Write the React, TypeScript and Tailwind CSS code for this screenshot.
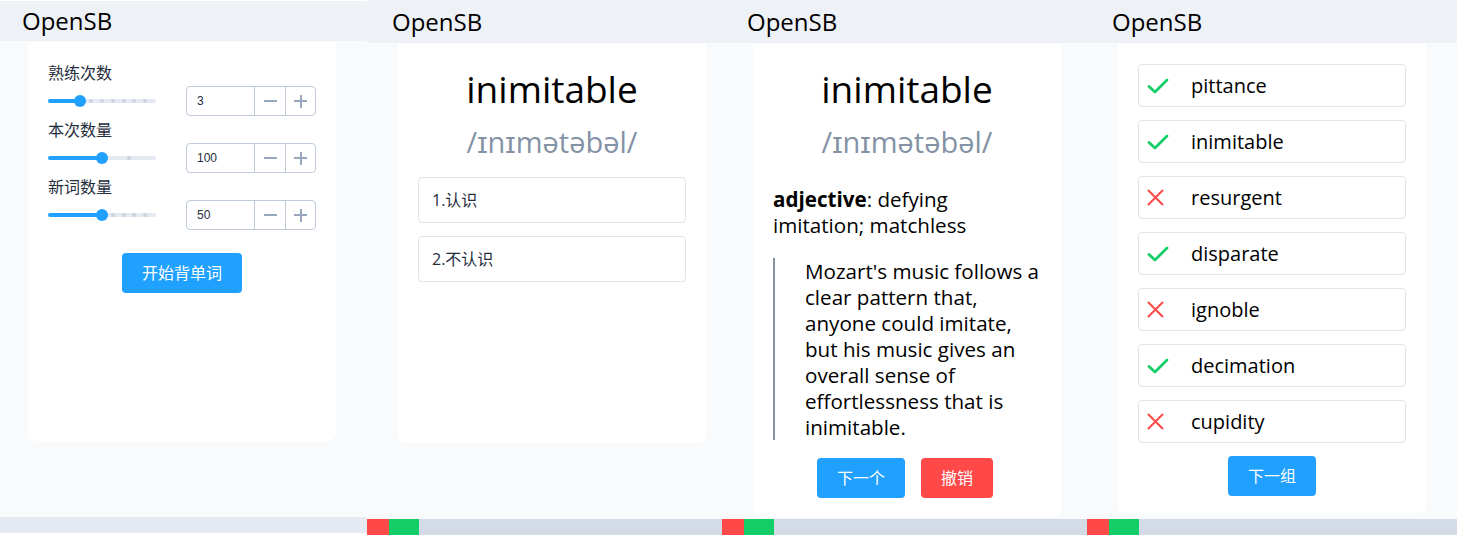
import React from "react";

const FONT = "font-['Open_Sans','Noto_Sans_CJK_SC',sans-serif]";

function Slider({ value, min, max, step }: { value: number; min: number; max: number; step: number }) {
  const pct = ((value - min) / (max - min)) * 100;
  const stops: number[] = [];
  for (let v = min + step; v < max; v += step) {
    if (v > value) stops.push(((v - min) / (max - min)) * 100);
  }
  return (
    <div className="relative w-[108px] h-[4px] rounded-full bg-[#e5e9f2]">
      <div className="absolute left-0 top-0 h-full rounded-full bg-[#20a0ff]" style={{ width: `${pct}%` }} />
      {stops.map((s) => (
        <div
          key={s}
          className="absolute top-0 w-[4px] h-[4px] -ml-[2px] rounded-full bg-[#cbd4df]"
          style={{ left: `${s}%` }}
        />
      ))}
      <div
        className="absolute top-[-4px] w-[12px] h-[12px] -ml-[6px] rounded-full bg-[#20a0ff]"
        style={{ left: `${pct}%` }}
      />
    </div>
  );
}

function NumberInput({ value }: { value: string }) {
  return (
    <div className="flex h-[30px] w-[130px] rounded-[4px] border border-[#bfcbd9] bg-white">
      <div className="flex-1 flex items-center pl-[10px] text-[12px] text-[#1f2d3d] font-['Liberation_Sans',sans-serif]">
        {value}
      </div>
      <div className="w-[31px] flex items-center justify-center border-l border-[#bfcbd9]">
        <div className="w-[13px] h-[2px] bg-[#97a8be]" />
      </div>
      <div className="relative w-[30px] flex items-center justify-center border-l border-[#bfcbd9]">
        <div className="w-[13px] h-[2px] bg-[#97a8be]" />
        <div className="absolute w-[2px] h-[13px] bg-[#97a8be]" />
      </div>
    </div>
  );
}

function Header({ h, pl }: { h: string; pl: string }) {
  return (
    <div className={`${h} ${pl} flex items-center bg-[#eef1f6] text-[24px] text-black`}>OpenSB</div>
  );
}

function ProgressBar() {
  return (
    <div className="flex h-[16px] bg-[#d3dce6]">
      <div className="w-[22px] bg-[#ff4949]" />
      <div className="w-[30px] bg-[#13ce66]" />
    </div>
  );
}

function WordHead() {
  return (
    <div className="flex flex-col items-center">
      <div className="text-[37px] leading-[44px] text-black">inimitable</div>
      <div className="mt-[11px] text-[29px] leading-[40px] text-[#8492a6]">/ɪnɪmətəbəl/</div>
    </div>
  );
}

function Check() {
  return (
    <svg width="22" height="16" viewBox="0 0 22 16" fill="none">
      <path d="M2 8.5 L8 14 L20 2" stroke="#13ce66" strokeWidth="2.8" strokeLinecap="round" strokeLinejoin="round" />
    </svg>
  );
}

function Cross() {
  return (
    <svg width="17" height="17" viewBox="0 0 17 17" fill="none">
      <path d="M1.5 1.5 L15.5 15.5 M15.5 1.5 L1.5 15.5" stroke="#ff4949" strokeWidth="2" strokeLinecap="round" />
    </svg>
  );
}

export default function App() {
  const settings = [
    { label: "熟练次数", value: 3, min: 0, max: 10, step: 1 },
    { label: "本次数量", value: 100, min: 0, max: 200, step: 50 },
    { label: "新词数量", value: 50, min: 0, max: 100, step: 10 },
  ];
  const words: [string, boolean][] = [
    ["pittance", true],
    ["inimitable", true],
    ["resurgent", false],
    ["disparate", true],
    ["ignoble", false],
    ["decimation", true],
    ["cupidity", false],
  ];
  return (
    <div className={`flex w-[1459px] h-[535px] bg-white ${FONT}`}>
      {/* Panel 1 */}
      <div className="flex flex-col w-[367px] pt-[1px]">
        <Header h="h-[40px]" pl="pl-[22px]" />
        <div className="h-[476px] bg-[#f9fafc] pl-[28px] pt-[1px]">
          <div className="w-[308px] h-[399px] bg-white rounded-b-lg px-[20px] pt-[21px] flex flex-col">
            {settings.map((s) => (
              <div key={s.label} className="flex flex-col mb-[4px]">
                <div className="text-[16px] leading-[20px] text-[#1f2d3d]">{s.label}</div>
                <div className="mt-[3px] flex items-center justify-between">
                  <Slider value={s.value} min={s.min} max={s.max} step={s.step} />
                  <NumberInput value={String(s.value)} />
                </div>
              </div>
            ))}
            <div className="flex justify-center mt-[19px]">
              <div className="w-[120px] h-[40px] rounded-[4px] bg-[#20a0ff] text-white text-[16px] flex items-center justify-center">
                开始背单词
              </div>
            </div>
          </div>
        </div>
        <div className="h-[16px] bg-[#e5e9f2]" />
      </div>

      {/* Panel 2 */}
      <div className="flex flex-col w-[355px]">
        <Header h="h-[43px]" pl="pl-[25px]" />
        <div className="h-[476px] bg-[#f9fafc] pl-[31px] pt-[1px]">
          <div className="w-[308px] h-[399px] bg-white rounded-b-lg px-[20px] pt-[23px]">
            <WordHead />
            <div className="mt-[15px] flex flex-col gap-[13px]">
              {["1.认识", "2.不认识"].map((t) => (
                <div
                  key={t}
                  className="h-[46px] rounded-[4px] border border-[#dfe6ec] pl-[13px] flex items-center text-[16px] text-[#1f2d3d]"
                >
                  {t}
                </div>
              ))}
            </div>
          </div>
        </div>
        <ProgressBar />
      </div>

      {/* Panel 3 */}
      <div className="flex flex-col w-[365px]">
        <Header h="h-[43px]" pl="pl-[25px]" />
        <div className="h-[476px] bg-[#f9fafc] pl-[31px] pt-[1px]">
          <div className="w-[308px] bg-white rounded-b-lg px-[20px] pt-[23px] pb-[19px]">
            <WordHead />
            <div className="mt-[24px] text-[20.6px] leading-[26px] text-black">
              <span className="font-bold">adjective</span>: defying imitation; matchless
            </div>
            <div className="mt-[20px] border-l-[2px] border-[#8492a6] pl-[30px] text-[20.6px] leading-[26px] text-black">
              Mozart's music follows a clear pattern that, anyone could imitate, but his music gives an overall sense of
              effortlessness that is inimitable.
            </div>
            <div className="mt-[18px] pr-[4px] flex justify-center gap-[16px]">
              <div className="w-[88px] h-[40px] rounded-[4px] bg-[#20a0ff] text-white text-[16px] flex items-center justify-center">
                下一个
              </div>
              <div className="w-[72px] h-[40px] rounded-[4px] bg-[#ff4949] text-white text-[16px] flex items-center justify-center">
                撤销
              </div>
            </div>
          </div>
        </div>
        <ProgressBar />
      </div>

      {/* Panel 4 */}
      <div className="flex flex-col w-[370px]">
        <Header h="h-[43px]" pl="pl-[25px]" />
        <div className="h-[476px] bg-[#f9fafc] pl-[31px] pt-[1px]">
          <div className="w-[308px] bg-white rounded-b-lg px-[20px] pt-[20px] pb-[17px]">
            <div className="flex flex-col gap-[13px]">
              {words.map(([w, ok]) => (
                <div
                  key={w}
                  className="h-[43px] rounded-[4px] border border-[#dfe6ec] flex items-center text-[20px] text-black"
                >
                  <div className="w-[52px] pl-[8px] flex items-center">{ok ? <Check /> : <Cross />}</div>
                  <span>{w}</span>
                </div>
              ))}
            </div>
            <div className="mt-[13px] flex justify-center">
              <div className="w-[88px] h-[40px] rounded-[4px] bg-[#20a0ff] text-white text-[16px] flex items-center justify-center">
                下一组
              </div>
            </div>
          </div>
        </div>
        <ProgressBar />
      </div>
    </div>
  );
}
